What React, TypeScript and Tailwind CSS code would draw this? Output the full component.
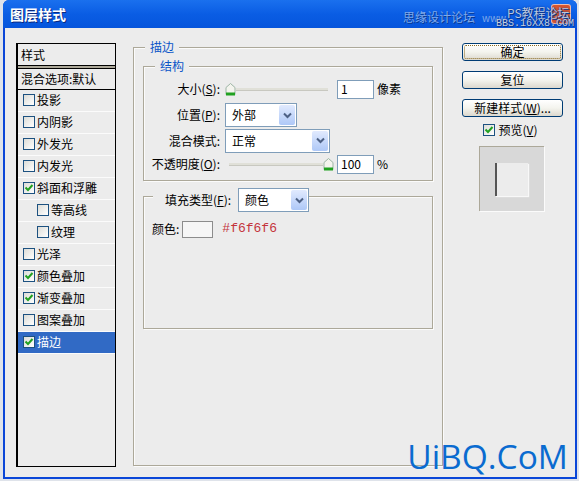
import React from "react";

const font = { fontFamily: '"Noto Sans CJK SC", sans-serif' };

function Check({ on }: { on?: boolean }) {
  return (
    <span className="w-[12px] h-[12px] shrink-0 border border-[#1c5180] bg-gradient-to-br from-[#dcdcd7] to-[#ffffff] flex items-center justify-center">
      {on && (
        <svg width="10" height="10" viewBox="0 0 10 10">
          <path d="M1.5 4.5 L4 7 L8.5 2" fill="none" stroke="#21a121" strokeWidth="2" />
        </svg>
      )}
    </span>
  );
}

function Row({ label, on, indent, active }: { label: string; on?: boolean; indent?: boolean; active?: boolean }) {
  return (
    <div
      className={`h-[22px] flex items-center gap-[2px] pb-[2px] border-b border-[#fbfbfb] ${indent ? "pl-[19px]" : "pl-[5px]"} ${
        active ? "bg-[#316ac5] text-white border-[#316ac5]" : "text-black"
      }`}
    >
      <Check on={on} />
      <span>{label}</span>
    </div>
  );
}

function Select({ value, w }: { value: string; w: string }) {
  return (
    <div className={`${w} h-[24px] border border-[#7f9db9] bg-white flex items-center justify-between pl-[6px] pr-px text-black`}>
      <span>{value}</span>
      <span className="w-[16px] h-[20px] bg-gradient-to-b from-[#e1eafe] to-[#aec8f7] rounded-[2px] flex items-center justify-center">
        <svg width="9" height="7" viewBox="0 0 9 7">
          <path d="M1 1.5 L4.5 5 L8 1.5" fill="none" stroke="#4d6185" strokeWidth="2" />
        </svg>
      </span>
    </div>
  );
}

function Btn({ children, focus }: { children: React.ReactNode; focus?: boolean }) {
  return (
    <div className="w-[101px] h-[18px] rounded-[3px] border border-[#003c74] bg-gradient-to-b from-[#ffffff] via-[#f4f4ee] to-[#dcd8ce] flex items-center justify-center text-black relative">
      {focus && <span className="absolute inset-px border border-dotted border-[#8a6a20] rounded-[2px]" />}
      {children}
    </div>
  );
}

function Thumb() {
  return (
    <svg width="11" height="13" viewBox="0 0 11 13" className="shrink-0">
      <path d="M5.5 0.5 L10 4.5 L10 11.5 L1 11.5 L1 4.5 Z" fill="#f4f4ee" stroke="#9db5a5" />
      <rect x="1" y="9.5" width="9" height="3" fill="#21a121" />
    </svg>
  );
}

function U({ children }: { children: string }) {
  return <span className="underline">{children}</span>;
}

const etched = "border border-[#aca899] shadow-[1px_1px_0_#fbfbfb,inset_1px_1px_0_#fbfbfb]";
const mark = "[text-shadow:0_0_2px_#0a2a80,1px_1px_0_#0a3a90] whitespace-nowrap";

export default function App() {
  return (
    <div className="w-[579px] h-[481px] overflow-hidden bg-[#dfe3ea] pl-[3px] pr-[2px] text-[12px] leading-[14px] relative" style={font}>
      <div className="h-[479px] bg-[#0a46d8] flex flex-col rounded-t-[6px] overflow-hidden pb-[2px]">
        <div className="h-[28px] shrink-0 bg-gradient-to-b from-[#1a70ee] via-[#0a5de4] to-[#0655dc] flex items-center pl-[7px] relative">
          <span className="text-white font-bold text-[14px] [text-shadow:1px_1px_0_#0a2a80]">图层样式</span>
          <span className="absolute left-[400px] top-[10px] text-[#7fa8ea] [text-shadow:1px_1px_0_#0a3a90] whitespace-nowrap">思缘设计论坛</span>
          <span className="absolute left-[479px] top-[11px] text-[#7fa8ea] text-[10px] whitespace-nowrap">www</span>
          <span className="absolute left-[548px] top-[4px] w-[20px] h-[20px] rounded-[3px] bg-[#d8552e] border border-white/60" />
          <span className={`absolute left-[504px] top-[6px] text-[#b8c8e0] ${mark}`}>PS教程论坛</span>
          <span className={`absolute left-[493px] top-[19px] text-[10px] leading-[10px] text-[#c4d0e0] ${mark}`} style={{ fontFamily: '"Liberation Mono", monospace' }}>BBS.16XX8.COM</span>
        </div>
        <div className="flex-1 mx-[2px] bg-[#ececec] flex items-start min-h-0">
          {/* style list */}
          <div className="w-[100px] h-[424px] ml-[11px] mt-[15px] border border-black border-l-2 shrink-0 text-black">
            <div className="h-[22px] flex items-center pl-[3px] border-b border-black">样式</div>
            <div className="h-[2px] bg-[#aca899]" />
            <div className="h-[22px] flex items-center pl-[3px] border-t border-b border-black whitespace-nowrap">混合选项:默认</div>
            <Row label="投影" />
            <Row label="内阴影" />
            <Row label="外发光" />
            <Row label="内发光" />
            <Row label="斜面和浮雕" on />
            <Row label="等高线" indent />
            <Row label="纹理" indent />
            <Row label="光泽" />
            <Row label="颜色叠加" on />
            <Row label="渐变叠加" on />
            <Row label="图案叠加" />
            <Row label="描边" on active />
          </div>

          {/* middle */}
          <fieldset className={`w-[310px] h-[426px] ml-[17px] mt-[12px] shrink-0 ${etched}`}>
            <legend className="ml-[11px] px-[5px] bg-[#ececec] text-[#0a55c8] h-[14px]">描边</legend>
            <fieldset className={`w-[290px] h-[122px] ml-[9px] mt-[5px] ${etched}`}>
              <legend className="ml-[11px] px-[5px] bg-[#ececec] text-[#0a55c8] h-[14px]">结构</legend>
              <div className="flex items-center h-[18px] mt-[7px] text-black">
                <span className="w-[76px] text-right">大小(<U>S</U>):</span>
                <span className="w-[103px] ml-[5px] flex items-center">
                  <Thumb />
                  <span className="flex-1 h-[3px] bg-[#e0e0d8] border-b border-[#c8c8c0]" />
                </span>
                <div className="w-[37px] h-[19px] ml-[9px] border border-[#7f9db9] bg-white flex items-center pl-[3px]">1</div>
                <span className="ml-[3px]">像素</span>
              </div>
              <div className="flex items-center h-[24px] mt-[5px] text-black">
                <span className="w-[76px] text-right">位置(<U>P</U>):</span>
                <span className="ml-[5px]"><Select value="外部" w="w-[72px]" /></span>
              </div>
              <div className="flex items-center h-[25px] mt-[1px] text-black">
                <span className="w-[76px] text-right">混合模式:</span>
                <span className="ml-[5px]"><Select value="正常" w="w-[105px]" /></span>
              </div>
              <div className="flex items-center h-[18px] mt-[2px] text-black">
                <span className="w-[76px] text-right whitespace-nowrap">不透明度(<U>O</U>):</span>
                <span className="w-[105px] ml-[9px] flex items-center">
                  <span className="flex-1 h-[3px] bg-[#e0e0d8] border-b border-[#c8c8c0]" />
                  <Thumb />
                </span>
                <div className="w-[37px] h-[19px] ml-[3px] border border-[#7f9db9] bg-white flex items-center pl-[3px]">100</div>
                <span className="ml-[3px]">%</span>
              </div>
            </fieldset>
            <fieldset className={`w-[290px] h-[141px] ml-[9px] mt-[7px] ${etched}`}>
              <legend className="ml-[9px] pl-[12px] pr-0 h-[16px] bg-[#ececec]">
                <span className="flex items-center h-[24px] text-black">
                  填充类型(<U>F</U>):
                  <span className="ml-[7px]"><Select value="颜色" w="w-[71px]" /></span>
                </span>
              </legend>
              <div className="flex items-center mt-[16px] ml-[8px] h-[18px] text-black">
                <span>颜色:</span>
                <span className="w-[31px] h-[17px] ml-[3px] border border-[#8c8c8c] bg-[#f6f6f6]" />
                <span className="ml-[9px] text-[13px] text-[#c4343c]" style={{ fontFamily: '"Liberation Mono", monospace' }}>#f6f6f6</span>
              </div>
            </fieldset>
          </fieldset>

          {/* right */}
          <div className="w-[101px] ml-[19px] mt-[15px] shrink-0 flex flex-col items-center gap-[10px] text-black">
            <Btn focus>确定</Btn>
            <Btn>复位</Btn>
            <Btn>新建样式(<U>W</U>)...</Btn>
            <div className="flex items-center gap-[3px] -mt-[4px] -ml-[4px] h-[14px]">
              <Check on />
              <span>预览(<U>V</U>)</span>
            </div>
            <div className="w-[65px] h-[65px] -mt-[1px] -ml-[2px] bg-[#d8d8d8] border-t border-l border-[#aca899] shadow-[1px_1px_0_#fbfbfb] flex items-center justify-center">
              <span className="w-[33px] h-[33px] -translate-x-[1px] bg-[#ececec] border-l-2 border-[#555] shadow-[1px_1px_1px_#f8f8f8]" />
            </div>
          </div>
        </div>
      </div>
      <span className="absolute right-[11px] bottom-[6px] text-[#0a6bd0] text-[33.5px] leading-[38px]" style={{ fontFamily: '"Open Sans", sans-serif' }}>UiBQ.CoM</span>
    </div>
  );
}
